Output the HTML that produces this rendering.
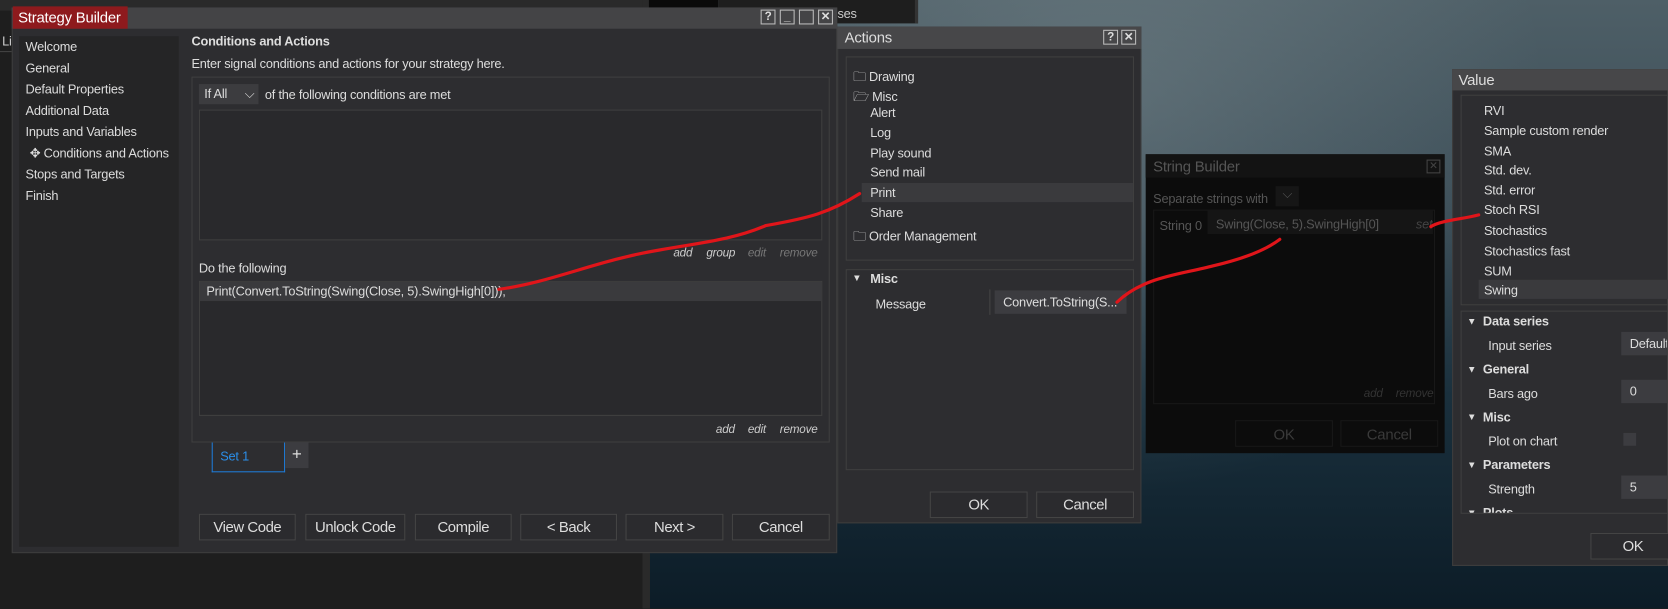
<!DOCTYPE html>
<html><head><meta charset="utf-8"><style>
html,body{margin:0;padding:0;width:1668px;height:609px;overflow:hidden;background:#1e1e1e;}
#w{position:absolute;left:0;top:0;width:1568px;height:572px;transform:scale(1.0638);transform-origin:0 0;font-family:"Liberation Sans",sans-serif;font-size:12px;color:#ddd;letter-spacing:-0.2px;}
.a{position:absolute;}
.btn{position:absolute;border:1px solid #444;background:#2b2b2e;color:#ddd;font-size:14px;text-align:center;box-sizing:border-box;line-height:23px;letter-spacing:-0.4px;}
.ic{position:absolute;width:14px;height:14px;border:1px solid #bbb;box-sizing:border-box;color:#ddd;font-size:11px;line-height:12px;text-align:center;font-weight:bold;}
.nav div{height:20px;line-height:20px;padding-left:6px;}
.it{position:absolute;font-size:12px;}
.lk{position:absolute;font-style:italic;font-size:11px;color:#ccc;}
.lk.d{color:#777;}
</style></head><body><div id="w">
<div class="a" style="left:610px;top:0;width:958px;height:572px;background:linear-gradient(180deg,#4e5f67 0%,#3a4c56 35%,#1a303d 65%,#0c1c27 100%);"></div>
<div class="a" style="left:610px;top:0;width:958px;height:572px;background:radial-gradient(ellipse at 45% 15%,rgba(140,155,160,.35),rgba(0,0,0,0) 55%);"></div>
<div class="a" style="left:604px;top:0;width:7px;height:572px;background:#2a2a2a;"></div>
<div class="a" style="left:0;top:0;width:604px;height:10px;background:#2a2a2a;"></div>
<div class="a" style="left:610px;top:0;width:65px;height:12px;background:#0a0a0a;"></div>
<div class="a" style="left:675px;top:0;width:185px;height:22px;background:#1e1e1e;border-right:3px solid #333;color:#ccc;font-size:12px;"><span style="position:absolute;left:100px;top:6px;">esses</span></div>
<div class="a" style="left:0;top:26px;width:11px;height:546px;background:#1e1e1e;color:#ccc;"><span style="position:absolute;left:2px;top:6px;">Li</span></div>
<div class="a" style="left:0;top:48px;width:11px;height:1px;background:#444;"></div>

<div class="a" style="left:11px;top:7px;width:776px;height:513px;background:#2d2d30;border:1px solid #3d3d3d;box-sizing:border-box;"></div>
<div class="a" style="left:11px;top:7px;width:776px;height:20px;background:#444446;"></div>
<div class="a" style="left:12px;top:6px;width:108px;height:21px;background:#8e1a1d;color:#fff;font-size:14px;line-height:20px;padding-left:5px;box-sizing:border-box;">Strategy Builder</div>
<div class="ic" style="left:715px;top:9px;">?</div>
<div class="ic" style="left:733px;top:9px;">_</div>
<div class="ic" style="left:751px;top:9px;"></div>
<div class="ic" style="left:769px;top:9px;">✕</div>
<div class="a nav" style="left:18px;top:34px;width:150px;height:480px;background:#252526;font-size:12px;color:#ddd;">
<div>Welcome</div><div>General</div><div>Default Properties</div><div>Additional Data</div><div>Inputs and Variables</div><div style="padding-left:10px">✥ Conditions and Actions</div><div>Stops and Targets</div><div>Finish</div></div>
<div class="a" style="left:180px;top:32px;font-weight:bold;font-size:12px;">Conditions and Actions</div>
<div class="a" style="left:180px;top:53px;">Enter signal conditions and actions for your strategy here.</div>
<div class="a" style="left:180px;top:72px;width:600px;height:344px;border:1px solid #3f3f3f;box-sizing:border-box;"></div>
<div class="a" style="left:187px;top:79px;width:56px;height:19px;background:#3c3c3f;line-height:19px;padding-left:5px;box-sizing:border-box;">If All <span style="position:absolute;right:4px;">⌵</span></div>
<div class="a" style="left:249px;top:82px;">of the following conditions are met</div>
<div class="a" style="left:187px;top:103px;width:586px;height:123px;background:#29292c;border:1px solid #3f3f3f;box-sizing:border-box;"></div>
<div class="lk" style="left:633px;top:232px;">add</div><div class="lk" style="left:664px;top:232px;">group</div><div class="lk d" style="left:703px;top:232px;">edit</div><div class="lk d" style="left:733px;top:232px;">remove</div>
<div class="a" style="left:187px;top:245px;">Do the following</div>
<div class="a" style="left:187px;top:264px;width:586px;height:127px;background:#29292c;border:1px solid #3f3f3f;box-sizing:border-box;"></div>
<div class="a" style="left:188px;top:265px;width:584px;height:18px;background:#3a3a3d;line-height:18px;padding-left:6px;box-sizing:border-box;">Print(Convert.ToString(Swing(Close, 5).SwingHigh[0]));</div>
<div class="lk" style="left:673px;top:398px;">add</div><div class="lk" style="left:703px;top:398px;">edit</div><div class="lk" style="left:733px;top:398px;">remove</div>
<div class="a" style="left:199px;top:416px;width:69px;height:28px;border:1px solid #1e7ad6;border-top:none;box-sizing:border-box;color:#2b8ee8;line-height:26px;padding-left:7px;">Set 1</div>
<div class="a" style="left:268px;top:416px;width:22px;height:24px;background:#3c3c40;text-align:center;line-height:24px;font-size:16px;">+</div>
<div class="btn" style="left:187px;top:483px;width:91px;height:25px;">View Code</div>
<div class="btn" style="left:287px;top:483px;width:94px;height:25px;">Unlock Code</div>
<div class="btn" style="left:390px;top:483px;width:91px;height:25px;">Compile</div>
<div class="btn" style="left:489px;top:483px;width:91px;height:25px;">&lt; Back</div>
<div class="btn" style="left:588px;top:483px;width:92px;height:25px;">Next &gt;</div>
<div class="btn" style="left:688px;top:483px;width:92px;height:25px;">Cancel</div>

<div class="a" style="left:787px;top:25px;width:286px;height:467px;background:#2d2d30;border:1px solid #3d3d3d;box-sizing:border-box;"></div>
<div class="a" style="left:787px;top:25px;width:286px;height:21px;background:#474749;color:#ddd;font-size:14px;line-height:21px;padding-left:7px;box-sizing:border-box;">Actions</div>
<div class="ic" style="left:1037px;top:28px;">?</div>
<div class="ic" style="left:1054px;top:28px;">✕</div>
<div class="a" style="left:795px;top:53px;width:271px;height:192px;border:1px solid #3f3f3f;box-sizing:border-box;"></div>
<div class="a" style="left:810px;top:172px;width:255px;height:18px;background:#3a3a3d;"></div>
<div class="it" style="left:802px;top:63px;">🗀 Drawing</div>
<div class="it" style="left:802px;top:82px;">🗁 Misc</div>
<div class="it" style="left:818px;top:99px;">Alert</div>
<div class="it" style="left:818px;top:118px;">Log</div>
<div class="it" style="left:818px;top:137px;">Play sound</div>
<div class="it" style="left:818px;top:155px;">Send mail</div>
<div class="it" style="left:818px;top:174px;">Print</div>
<div class="it" style="left:818px;top:193px;">Share</div>
<div class="it" style="left:802px;top:213px;">🗀 Order Management</div>
<div class="a" style="left:795px;top:253px;width:271px;height:189px;border:1px solid #3f3f3f;box-sizing:border-box;"></div>
<div class="it" style="left:801px;top:256px;font-size:9px;">▼</div>
<div class="it" style="left:818px;top:255px;font-weight:bold;">Misc</div>
<div class="it" style="left:823px;top:279px;">Message</div>
<div class="a" style="left:930px;top:272px;width:1px;height:24px;background:#444;"></div>
<div class="a" style="left:935px;top:273px;width:124px;height:22px;background:#3c3c40;line-height:22px;padding-left:8px;box-sizing:border-box;">Convert.ToString(S...</div>
<div class="btn" style="left:874px;top:462px;width:92px;height:25px;">OK</div>
<div class="btn" style="left:974px;top:462px;width:92px;height:25px;">Cancel</div>

<div class="a" style="left:1077px;top:145px;width:281px;height:281px;background:#0c0c0c;"></div>
<div class="a" style="left:1077px;top:145px;width:281px;height:22px;background:#131313;color:#555;font-size:14px;line-height:22px;padding-left:7px;box-sizing:border-box;">String Builder</div>
<div class="a" style="left:1341px;top:150px;width:13px;height:13px;border:1px solid #444;color:#444;font-size:10px;text-align:center;line-height:12px;box-sizing:border-box;">✕</div>
<div class="a" style="left:1084px;top:180px;color:#555;">Separate strings with</div>
<div class="a" style="left:1199px;top:175px;width:22px;height:19px;background:#161616;color:#555;text-align:center;">⌵</div>
<div class="a" style="left:1084px;top:197px;width:265px;height:183px;border:1px solid #181818;box-sizing:border-box;"></div>
<div class="a" style="left:1135px;top:198px;width:212px;height:22px;background:#151515;"></div>
<div class="a" style="left:1090px;top:205px;color:#555;">String 0</div>
<div class="a" style="left:1143px;top:204px;color:#555;">Swing(Close, 5).SwingHigh[0]</div>
<div class="a" style="left:1331px;top:204px;color:#444;font-style:italic;">set</div>
<div class="a" style="left:1282px;top:364px;color:#333;font-style:italic;font-size:11px;">add</div>
<div class="a" style="left:1312px;top:364px;color:#333;font-style:italic;font-size:11px;">remove</div>
<div class="a" style="left:1161px;top:395px;width:92px;height:25px;border:1px solid #181818;color:#3a3a3a;font-size:14px;text-align:center;line-height:25px;box-sizing:border-box;">OK</div>
<div class="a" style="left:1260px;top:395px;width:92px;height:25px;border:1px solid #181818;color:#3a3a3a;font-size:14px;text-align:center;line-height:25px;box-sizing:border-box;">Cancel</div>

<div class="a" style="left:1365px;top:65px;width:203px;height:467px;background:#2d2d30;border:1px solid #3d3d3d;box-sizing:border-box;"></div>
<div class="a" style="left:1365px;top:65px;width:203px;height:20px;background:#474749;color:#ddd;font-size:14px;line-height:20px;padding-left:6px;box-sizing:border-box;">Value</div>
<div class="a" style="left:1373px;top:89px;width:195px;height:198px;border:1px solid #3f3f3f;box-sizing:border-box;"></div>
<div class="a" style="left:1390px;top:263px;width:178px;height:18px;background:#3a3a3d;"></div>
<div class="it" style="left:1395px;top:97px;">RVI</div>
<div class="it" style="left:1395px;top:116px;">Sample custom render</div>
<div class="it" style="left:1395px;top:135px;">SMA</div>
<div class="it" style="left:1395px;top:153px;">Std. dev.</div>
<div class="it" style="left:1395px;top:172px;">Std. error</div>
<div class="it" style="left:1395px;top:190px;">Stoch RSI</div>
<div class="it" style="left:1395px;top:210px;">Stochastics</div>
<div class="it" style="left:1395px;top:229px;">Stochastics fast</div>
<div class="it" style="left:1395px;top:248px;">SUM</div>
<div class="it" style="left:1395px;top:266px;">Swing</div>
<div class="a" style="left:1373px;top:292px;width:195px;height:191px;border:1px solid #3f3f3f;box-sizing:border-box;overflow:hidden;">
<div class="it" style="left:5px;top:4px;font-size:9px;">▼</div><div class="it" style="left:20px;top:2px;font-weight:bold;">Data series</div>
<div class="it" style="left:25px;top:25px;">Input series</div><div class="a" style="left:150px;top:19px;width:45px;height:22px;background:#3c3c40;line-height:22px;padding-left:8px;box-sizing:border-box;">Default</div>
<div class="it" style="left:5px;top:49px;font-size:9px;">▼</div><div class="it" style="left:20px;top:47px;font-weight:bold;">General</div>
<div class="it" style="left:25px;top:70px;">Bars ago</div><div class="a" style="left:150px;top:64px;width:45px;height:22px;background:#3c3c40;line-height:22px;padding-left:8px;box-sizing:border-box;">0</div>
<div class="it" style="left:5px;top:94px;font-size:9px;">▼</div><div class="it" style="left:20px;top:92px;font-weight:bold;">Misc</div>
<div class="it" style="left:25px;top:115px;">Plot on chart</div><div class="a" style="left:152px;top:114px;width:12px;height:12px;background:#3c3c40;"></div>
<div class="it" style="left:5px;top:139px;font-size:9px;">▼</div><div class="it" style="left:20px;top:137px;font-weight:bold;">Parameters</div>
<div class="it" style="left:25px;top:160px;">Strength</div><div class="a" style="left:150px;top:154px;width:45px;height:22px;background:#3c3c40;line-height:22px;padding-left:8px;box-sizing:border-box;">5</div>
<div class="it" style="left:5px;top:184px;font-size:9px;">▼</div><div class="it" style="left:20px;top:182px;font-weight:bold;">Plots</div>
</div>
<div class="btn" style="left:1495px;top:501px;width:80px;height:25px;">OK</div>

<svg class="a" style="left:0;top:0;" width="1568" height="572"><g fill="none" stroke="#e0151a" stroke-width="3" stroke-linecap="round">
<path d="M469 272 C520 265 560 245 620 235 C660 228 690 225 720 212 C760 205 780 200 808 182"/>
<path d="M1050 284 C1075 260 1110 258 1140 250 C1170 243 1190 235 1203 225"/>
<path d="M1345 213 C1355 207 1375 206 1390 202"/>
</g></svg>
</div></body></html>
